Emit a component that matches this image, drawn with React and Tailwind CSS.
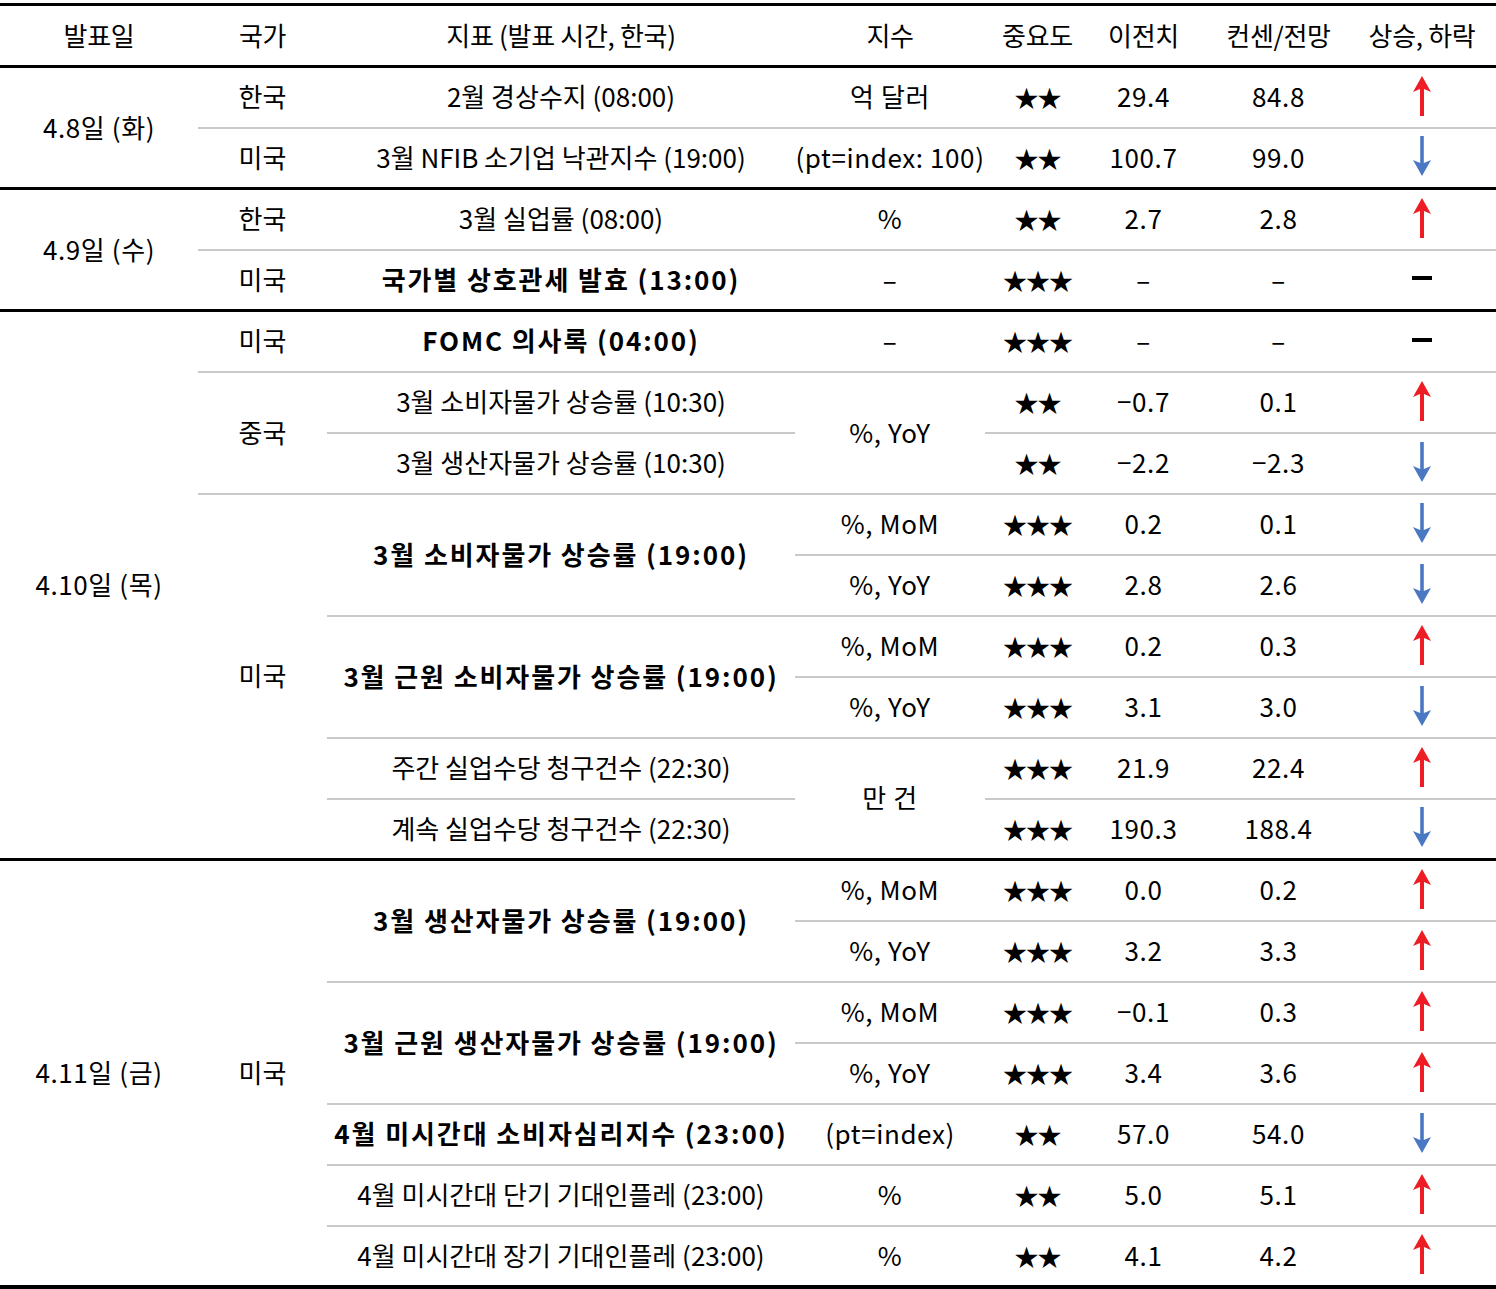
import React from "react";

const rows = [
  { g: true, date: ["4.8일 (화)", 2], country: ["한국", 1], ind: ["2월 경상수지 (08:00)"], unit: ["억 달러"], imp: 2, prev: "29.4", cons: "84.8", dir: "up" },
  { country: ["미국", 1], ind: ["3월 NFIB 소기업 낙관지수 (19:00)"], unit: ["(pt=index: 100)"], imp: 2, prev: "100.7", cons: "99.0", dir: "down" },
  { g: true, date: ["4.9일 (수)", 2], country: ["한국", 1], ind: ["3월 실업률 (08:00)"], unit: ["%"], imp: 2, prev: "2.7", cons: "2.8", dir: "up" },
  { country: ["미국", 1], ind: ["국가별 상호관세 발효 (13:00)", 1, true], unit: ["–"], imp: 3, prev: "–", cons: "–", dir: "flat" },
  { g: true, date: ["4.10일 (목)", 9], country: ["미국", 1], ind: ["FOMC 의사록 (04:00)", 1, true], unit: ["–"], imp: 3, prev: "–", cons: "–", dir: "flat" },
  { country: ["중국", 2], ind: ["3월 소비자물가 상승률 (10:30)"], unit: ["%, YoY", 2], imp: 2, prev: "−0.7", cons: "0.1", dir: "up" },
  { ind: ["3월 생산자물가 상승률 (10:30)"], imp: 2, prev: "−2.2", cons: "−2.3", dir: "down" },
  { country: ["미국", 6], ind: ["3월 소비자물가 상승률 (19:00)", 2, true], unit: ["%, MoM"], imp: 3, prev: "0.2", cons: "0.1", dir: "down" },
  { unit: ["%, YoY"], imp: 3, prev: "2.8", cons: "2.6", dir: "down" },
  { ind: ["3월 근원 소비자물가 상승률 (19:00)", 2, true], unit: ["%, MoM"], imp: 3, prev: "0.2", cons: "0.3", dir: "up" },
  { unit: ["%, YoY"], imp: 3, prev: "3.1", cons: "3.0", dir: "down" },
  { ind: ["주간 실업수당 청구건수 (22:30)"], unit: ["만 건", 2], imp: 3, prev: "21.9", cons: "22.4", dir: "up" },
  { ind: ["계속 실업수당 청구건수 (22:30)"], imp: 3, prev: "190.3", cons: "188.4", dir: "down" },
  { g: true, date: ["4.11일 (금)", 7], country: ["미국", 7], ind: ["3월 생산자물가 상승률 (19:00)", 2, true], unit: ["%, MoM"], imp: 3, prev: "0.0", cons: "0.2", dir: "up" },
  { unit: ["%, YoY"], imp: 3, prev: "3.2", cons: "3.3", dir: "up" },
  { ind: ["3월 근원 생산자물가 상승률 (19:00)", 2, true], unit: ["%, MoM"], imp: 3, prev: "−0.1", cons: "0.3", dir: "up" },
  { unit: ["%, YoY"], imp: 3, prev: "3.4", cons: "3.6", dir: "up" },
  { ind: ["4월 미시간대 소비자심리지수 (23:00)", 1, true], unit: ["(pt=index)"], imp: 2, prev: "57.0", cons: "54.0", dir: "down" },
  { ind: ["4월 미시간대 단기 기대인플레 (23:00)"], unit: ["%"], imp: 2, prev: "5.0", cons: "5.1", dir: "up" },
  { ind: ["4월 미시간대 장기 기대인플레 (23:00)"], unit: ["%"], imp: 2, prev: "4.1", cons: "4.2", dir: "up" },
];

const Arrow = ({ dir }) => {
  if (dir === "flat") {
    return <div className="mx-auto w-[20px] h-[4px] bg-black" />;
  }
  if (dir === "up") {
    return (
      <svg width="20" height="40" viewBox="0 0 20 40" className="mx-auto block">
        <path d="M10 0 L19 16 L12 13 L12 40 L8 40 L8 13 L1 16 Z" fill="#ee1c24" />
      </svg>
    );
  }
  return (
    <svg width="20" height="40" viewBox="0 0 20 40" className="mx-auto block">
      <path d="M10 40 L19 24 L11.8 27 L11.8 0 L8.2 0 L8.2 27 L1 24 Z" fill="#4a78c2" />
    </svg>
  );
};

const Cell = ({ top, rowSpan = 1, bold, last, num, right, children }) => (
  <td
    rowSpan={rowSpan}
    className={`p-0 pb-[3px] h-[61px] text-center align-middle whitespace-nowrap ${
      top ? "border-t-[3px] border-t-black" : "border-t-2 border-t-[#c9c9c9]"
    } ${last ? "border-b-[4px] border-b-black" : ""} ${
      bold ? "font-bold tracking-[1.9px]" : num ? "tracking-[0.6px]" : "tracking-[0px]"
    } ${right ? "pr-[12px]" : ""}`}
  >
    {children}
  </td>
);

export default function App() {
  const headers = ["발표일", "국가", "지표 (발표 시간, 한국)", "지수", "중요도", "이전치", "컨센/전망", "상승, 하락"];
  const widths = [198, 129, 468, 190, 105, 107, 163, 136];

  return (
    <div className="w-[1496px] bg-white pt-[3px] text-black text-[26px] font-['Noto_Sans_CJK_KR',sans-serif]">
      <table className="w-full table-fixed border-collapse">
        <colgroup>
          {widths.map((w, i) => (
            <col key={i} style={{ width: w }} />
          ))}
        </colgroup>
        <thead>
          <tr>
            {headers.map((h, i) => (
              <th
                key={h}
                className={`p-0 pb-[3px] h-[62px] font-normal tracking-[-0.3px] text-center align-middle border-t-[3px] border-t-black ${
                  i === 7 ? "pr-[12px]" : ""
                }`}
              >
                {h}
              </th>
            ))}
          </tr>
        </thead>
        <tbody>
          {rows.map((r, i) => {
            const top = !!r.g;
            const n = rows.length;
            const last = i === n - 1;
            return (
              <tr key={i}>
                {r.date && (
                  <Cell top={top} num rowSpan={r.date[1]} last={i + r.date[1] === n}>
                    {r.date[0]}
                  </Cell>
                )}
                {r.country && (
                  <Cell top={top} rowSpan={r.country[1]} last={i + r.country[1] === n}>
                    {r.country[0]}
                  </Cell>
                )}
                {r.ind && (
                  <Cell top={top} rowSpan={r.ind[1] || 1} bold={r.ind[2]} last={i + (r.ind[1] || 1) === n}>
                    {r.ind[0]}
                  </Cell>
                )}
                {r.unit && (
                  <Cell top={top} num rowSpan={r.unit[1] || 1} last={i + (r.unit[1] || 1) === n}>
                    {r.unit[0]}
                  </Cell>
                )}
                <Cell top={top} last={last}>
                  <span className="text-[24px] tracking-[-1px]">{"★".repeat(r.imp)}</span>
                </Cell>
                <Cell top={top} num last={last}>{r.prev}</Cell>
                <Cell top={top} num last={last}>{r.cons}</Cell>
                <Cell top={top} last={last} right>
                  <Arrow dir={r.dir} />
                </Cell>
              </tr>
            );
          })}
        </tbody>
      </table>
      <div className="mt-[2px] h-[2px] bg-black" />
    </div>
  );
}
